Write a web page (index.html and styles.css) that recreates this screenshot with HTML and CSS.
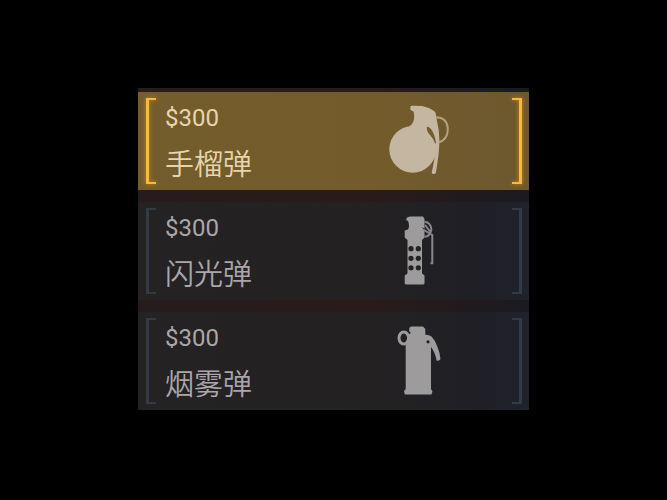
FILE: index.html
```html
<!DOCTYPE html>
<html lang="zh-CN">
  <head>
    <meta charset="UTF-8" />
    <meta name="viewport" content="width=device-width, initial-scale=1.0" />
    <title>手榴弹</title>
    <link rel="stylesheet" href="styles.css">
  </head>
  <body>
    <main class="buy-menu">
      <button type="button" class="item selected">
        <span class="bracket left"></span>
        <span class="info">
          <span class="price">$300</span>
          <span class="name">手榴弹</span>
        </span>
        <svg class="icon" viewBox="0 0 64 72" aria-hidden="true">
          <circle cx="25.7" cy="44.3" r="23.4" />
          <path d="M23.3 1.5Q24 .6 26 .8L35 1Q43 2.5 48.3 7Q49.5 12 50 16Q52.3 25 52.4 35Q52.4 48 48.8 68Q46.5 70 44.6 68Q47 58 47.5 52L24 30L20 23Q26 20 27 14Q27.5 9 26.5 6.500L23.5 5Z" />
          <path d="M30 20H49V44L44 48L28 38Z" />
          <path class="hole" d="M39.8 22Q41 20.8 43.5 23.5Q47.5 28 49 37.5L48.3 39Q46.5 33.5 43 30Q39.5 26.5 39.8 22Z" />
          <path class="wire" d="M49 12.5C57 11.5 61 18 60.8 25C60.5 32 56.5 36 51.5 37.5" />
        </svg>
        <span class="bracket right"></span>
      </button>

      <button type="button" class="item">
        <span class="bracket left"></span>
        <span class="info">
          <span class="price">$300</span>
          <span class="name">闪光弹</span>
        </span>
        <svg class="icon" viewBox="0 0 64 72" aria-hidden="true">
          <path d="M20 2.5L23 1.5H36L37.5 4V22.5L35 25V58.5L37.5 60.5V68.5L36.5 69.5H18.7L17.7 68.5V60.5L20.5 58.5V25L17.7 22.5V15.5L21 14.5Q23 10.5 21 6L19 5Z" />
          <g class="hole">
            <circle cx="24" cy="33.7" r="2.6" />
            <circle cx="31.3" cy="33.7" r="2.6" />
            <circle cx="24" cy="43.3" r="2.6" />
            <circle cx="31.3" cy="43.3" r="2.6" />
            <circle cx="24" cy="52.8" r="2.6" />
            <circle cx="31.3" cy="52.8" r="2.6" />
            <path d="M34.500 12L37.500 13.500V15Z" />
          </g>
          <path class="wire" d="M37.5 6.8C42 7 44.5 11 44.3 15C43.5 19 41 21.5 37.5 21.7M38 10L43.5 17M36 14.5L45.3 20V48.3H43.5" />
        </svg>
        <span class="bracket right"></span>
      </button>

      <button type="button" class="item">
        <span class="bracket left"></span>
        <span class="info">
          <span class="price">$300</span>
          <span class="name">烟雾弹</span>
        </span>
        <svg class="icon" viewBox="0 0 64 72" aria-hidden="true">
          <path d="M22.3 3L24 1.5H36L38.3 4V9.7Q42 9.5 44.5 11.5Q48 15 50.3 21.5Q53 28 53.5 34Q52.5 36.3 49.5 35.5Q48.5 28 44 22V64L45.5 66.5L44.5 69.5H17.8L17 66L18.7 64V19L21 10L24 8L22.3 6.5Z" />
          <ellipse class="ring" cx="16.8" cy="13" rx="4.8" ry="6" />
          <circle class="hole" cx="41" cy="16.8" r="1.6" />
        </svg>
        <span class="bracket right"></span>
      </button>
    </main>
  </body>
</html>
```

FILE: styles.css
```css
* {
  box-sizing: border-box;
}
body {
  margin: 0;
  padding-bottom: 2px;
  min-height: 100vh;
  display: flex;
  align-items: center;
  justify-content: center;
  background-color: #000;
}
.buy-menu {
  width: 100%;
  max-width: 391px;
  padding-top: 4px;
  display: flex;
  flex-direction: column;
  gap: 12px;
  background: linear-gradient(90deg, #271c1c, #2a1b1a 60%, #1b1a20);
}
.item {
  --fill: #232122;
  --line: #343b48;
  display: flex;
  align-items: stretch;
  width: 100%;
  padding: 6px 7px 6px 8px;
  border: none;
  background: linear-gradient(90deg, #242223, #232122 60%, #1f1f26 88%, #20232c);
  color: #aaa6ab;
  text-align: left;
  cursor: pointer;
}
.selected {
  --fill: #735c2d;
  --line: #f7b944;
  background: linear-gradient(90deg, #745d2d, #735b2b 60%, #6d582f);
  color: #e6d5ad;
}
/* Corner brackets at both ends of a row */
.bracket {
  width: 10px;
  border: 2px solid var(--line);
}
.left {
  border-left-width: 3px;
  border-right: none;
}
.right {
  border-right-width: 3px;
  border-left: none;
}
.selected .bracket {
  filter: drop-shadow(0 0 2px #d18b12);
}
.info {
  display: flex;
  flex-direction: column;
  gap: 10px;
  padding: 6px 0 0 9px;
}
.price {
  font-family: Roboto, sans-serif;
  font-size: 24px;
  line-height: 28px;
}
.name {
  font-family: "Noto Sans CJK SC", sans-serif;
  font-size: 29px;
  font-weight: 350;
  line-height: 40px;
}
.icon {
  width: 64px;
  height: 72px;
  margin: 7px 61px 7px auto;
  fill: #9d9b9c;
  stroke: none;
}
.selected .icon {
  fill: #c4b6a0;
}
.icon .hole {
  fill: var(--fill);
}
.icon .wire,
.icon .ring {
  fill: none;
  stroke: #89878a;
  stroke-width: 2;
}
.icon .ring {
  stroke: #9d9b9c;
  stroke-width: 3;
}
.selected .icon .wire {
  stroke: #b3a27f;
}
```
